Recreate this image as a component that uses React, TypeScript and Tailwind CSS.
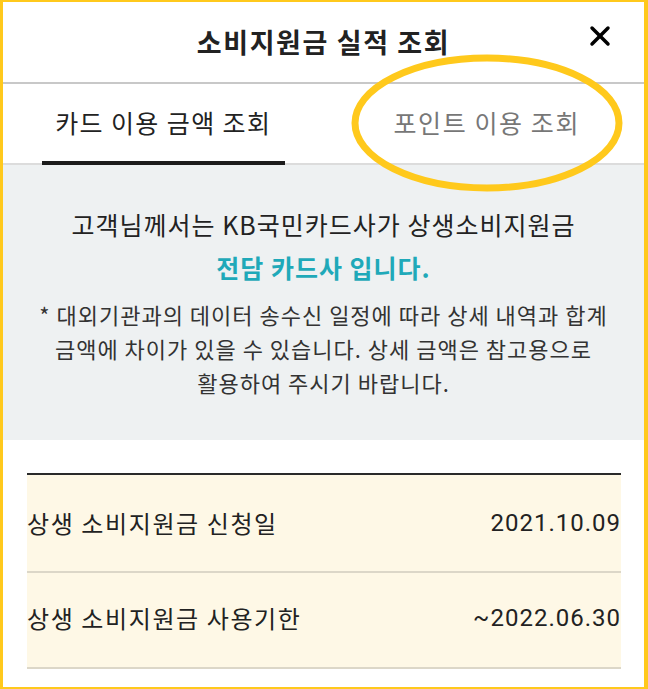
import { X } from "lucide-react";

const rows = [
  { label: "상생 소비지원금 신청일", value: "2021.10.09", h: "h-[98px]" },
  { label: "상생 소비지원금 사용기한", value: "~2022.06.30", h: "h-[96px] pb-[5px]" },
];

export default function App() {
  return (
    <div
      className="relative w-[648px] h-[689px] overflow-hidden bg-white border-l-[3px] border-t-2 border-r-4 border-b-2 border-[#ffc91c] text-[#222]"
      style={{ fontFamily: '"Noto Sans CJK KR", Roboto, sans-serif' }}
    >
      {/* header */}
      <div className="relative flex h-[80px] items-center justify-center">
        <h1 className="text-[27px] font-bold tracking-[1.6px]">소비지원금 실적 조회</h1>
        <button className="absolute right-[28px] top-[18px] text-black">
          <X size={32} strokeWidth={2.6} />
        </button>
      </div>
      <div className="h-[2px] bg-[#c8c8c8]" />

      {/* tabs */}
      <div className="flex h-[81px] border-b-2 border-[#dcdcdc]">
        <div className="flex flex-1 px-[39px]">
          <div className="-mb-[2px] flex flex-1 items-center justify-center border-b-4 border-[#1c1c1c] text-[25px] tracking-[1.4px]">
            카드 이용 금액 조회
          </div>
        </div>
        <div className="flex flex-1 px-[39px]">
          <div className="flex flex-1 items-center justify-center pb-[2px] pl-[6px] text-[25px] tracking-[1.6px] text-[#777]">
            포인트 이용 조회
          </div>
        </div>
      </div>

      {/* notice */}
      <div className="h-[275px] bg-[#eef1f2] pt-[38px] text-center">
        <p className="text-[25px] leading-[43px] tracking-[1px]">고객님께서는 KB국민카드사가 상생소비지원금</p>
        <p className="text-[25px] font-bold leading-[43px] tracking-[1px] text-[#1fa9b9]">전담 카드사 입니다.</p>
        <p className="mt-[8px] text-[22px] leading-[34px] tracking-[1px] text-[#333]">
          * 대외기관과의 데이터 송수신 일정에 따라 상세 내역과 합계
          <br />
          금액에 차이가 있을 수 있습니다. 상세 금액은 참고용으로
          <br />
          활용하여 주시기 바랍니다.
        </p>
      </div>

      {/* table */}
      <div className="ml-[24px] mr-[23px] mt-[33px] border-t-2 border-[#2a2a2a]">
        {rows.map((r) => (
          <div
            key={r.label}
            className={`flex ${r.h} items-center justify-between border-b-2 border-[#dcd7c8] bg-[#fef8e6] text-[24px] tracking-[1.6px]`}
          >
            <span>{r.label}</span>
            <span className="tracking-[1px]" style={{ fontFamily: "Roboto, sans-serif" }}>
              {r.value}
            </span>
          </div>
        ))}
      </div>

      {/* highlight ellipse */}
      <svg className="pointer-events-none absolute left-0 top-0" width="648" height="689">
        <ellipse cx="484" cy="121" rx="132" ry="65" fill="none" stroke="#ffc91c" strokeWidth="7" />
      </svg>
    </div>
  );
}
